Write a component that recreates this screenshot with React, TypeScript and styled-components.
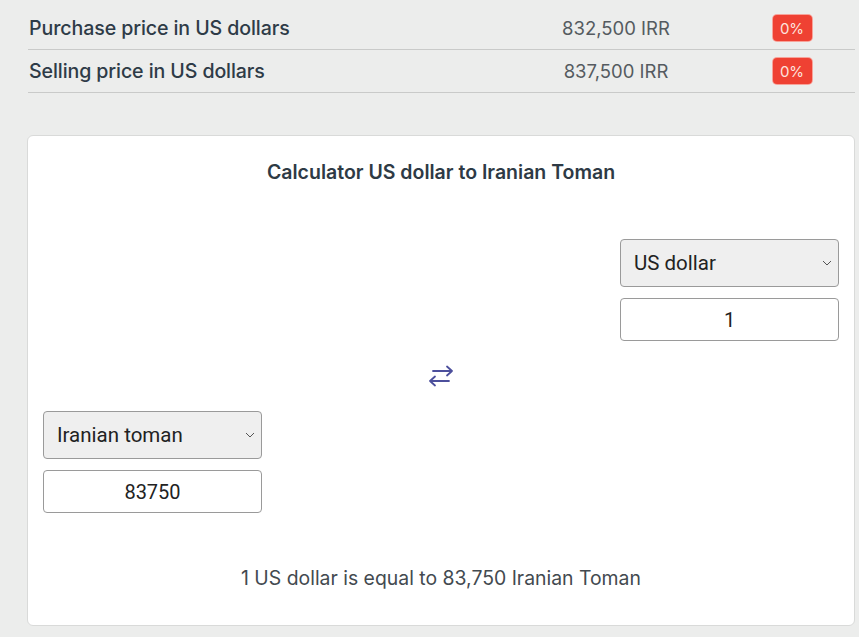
import React, { useState } from "react";
import styled, { createGlobalStyle } from "styled-components";

const Global = createGlobalStyle`
  html, body { margin: 0; padding: 0; background: #ecedec; }
  body { font-family: Inter, "Noto Sans", sans-serif; color: #2d3a45; }
  * { box-sizing: border-box; }
`;

const Page = styled.div`
  padding: 7px 4px 12px 27px;
`;

const PriceTable = styled.div`
  display: flex;
  flex-direction: column;
  padding-left: 1px;
`;

const PriceRow = styled.div`
  display: grid;
  grid-template-columns: 1fr 180px 126px;
  column-gap: 23px;
  align-items: center;
  height: 43px;
  border-bottom: 1.5px solid #c9cac9;
`;

const Label = styled.div`
  font-size: 19.6px;
  font-weight: 500;
  letter-spacing: -0.1px;
  color: #2e3b47;
  padding-left: 1px;
`;

const Value = styled.div`
  font-size: 18.5px;
  color: #555b60;
  text-align: center;
`;

const Badge = styled.span`
  justify-self: center;
  display: inline-flex;
  align-items: center;
  justify-content: center;
  width: 39px;
  height: 26px;
  border-radius: 4px;
  background: #ef4133;
  color: #fde3df;
  font-size: 15px;
  box-shadow: 0 0 0 1px #f7a39a;
`;

const Card = styled.section`
  margin-top: 42px;
  background: #fff;
  border: 1px solid #d9dad9;
  border-radius: 6px;
  padding: 24px 15px 35px;
  display: flex;
  flex-direction: column;
  align-items: stretch;
`;

const Title = styled.h2`
  margin: 0;
  text-align: center;
  font-size: 19.5px;
  line-height: 24px;
  font-weight: 600;
  color: #2e3a45;
`;

const Converter = styled.div`
  margin-top: 55px;
  height: 274px;
  display: flex;
  justify-content: space-between;
`;

const Group = styled.div<{ $align: "flex-start" | "flex-end" }>`
  width: 219px;
  align-self: ${(p) => p.$align};
  display: flex;
  flex-direction: column;
  gap: 11px;
`;

const SelectBox = styled.div`
  position: relative;
  height: 48px;
  border: 1px solid #9a9a9a;
  border-radius: 4px;
  background: #efefef;
  display: flex;
  align-items: center;
  padding: 0 13px;
  font-family: Roboto, "Noto Sans", sans-serif;
  font-size: 20.5px;
  color: #222;
`;

const Chevron = styled.svg`
  position: absolute;
  right: 6px;
  top: 50%;
  transform: translateY(-50%);
`;

const NumberInput = styled.input`
  height: 43px;
  width: 100%;
  border: 1px solid #9a9a9a;
  border-radius: 4px;
  background: #fff;
  text-align: center;
  font-family: Roboto, "Noto Sans", sans-serif;
  font-size: 20px;
  color: #222;
  outline: none;
`;

const SwapButton = styled.button`
  align-self: center;
  background: none;
  border: none;
  padding: 0;
  width: 30px;
  height: 30px;
  display: flex;
  align-items: center;
  justify-content: center;
  cursor: pointer;
`;

const Result = styled.p`
  margin: 53px 0 0;
  text-align: center;
  font-size: 19.4px;
  line-height: 24px;
  color: #434a50;
`;

function Select({ label }: { label: string }) {
  return (
    <SelectBox>
      {label}
      <Chevron width="10" height="6" viewBox="0 0 10 6">
        <path d="M1 1l4 4 4-4" fill="none" stroke="#555" strokeWidth="1" />
      </Chevron>
    </SelectBox>
  );
}

export default function App() {
  const [usd, setUsd] = useState("1");
  const [irt, setIrt] = useState("83750");
  return (
    <>
      <Global />
      <Page>
        <PriceTable>
          <PriceRow>
            <Label>Purchase price in US dollars</Label>
            <Value>832,500 IRR</Value>
            <Badge>0%</Badge>
          </PriceRow>
          <PriceRow>
            <Label>Selling price in US dollars</Label>
            <Value>837,500 IRR</Value>
            <Badge>0%</Badge>
          </PriceRow>
        </PriceTable>
        <Card>
          <Title>Calculator US dollar to Iranian Toman</Title>
          <Converter>
            <Group $align="flex-end">
              <Select label="Iranian toman" />
              <NumberInput value={irt} onChange={(e) => setIrt(e.target.value)} />
            </Group>
            <SwapButton aria-label="swap">
              <svg width="30" height="30" viewBox="0 0 30 30" fill="none" stroke="#4c4f9c" strokeWidth="1.8" strokeLinecap="round" strokeLinejoin="round">
                <path d="M7 10h19M21 5.5l5 4.5-5 4.5" />
                <path d="M23 20H4M9 15.5l-5 4.5 5 4.5" />
              </svg>
            </SwapButton>
            <Group $align="flex-start">
              <Select label="US dollar" />
              <NumberInput value={usd} onChange={(e) => setUsd(e.target.value)} />
            </Group>
          </Converter>
          <Result>1 US dollar is equal to 83,750 Iranian Toman</Result>
        </Card>
      </Page>
    </>
  );
}
